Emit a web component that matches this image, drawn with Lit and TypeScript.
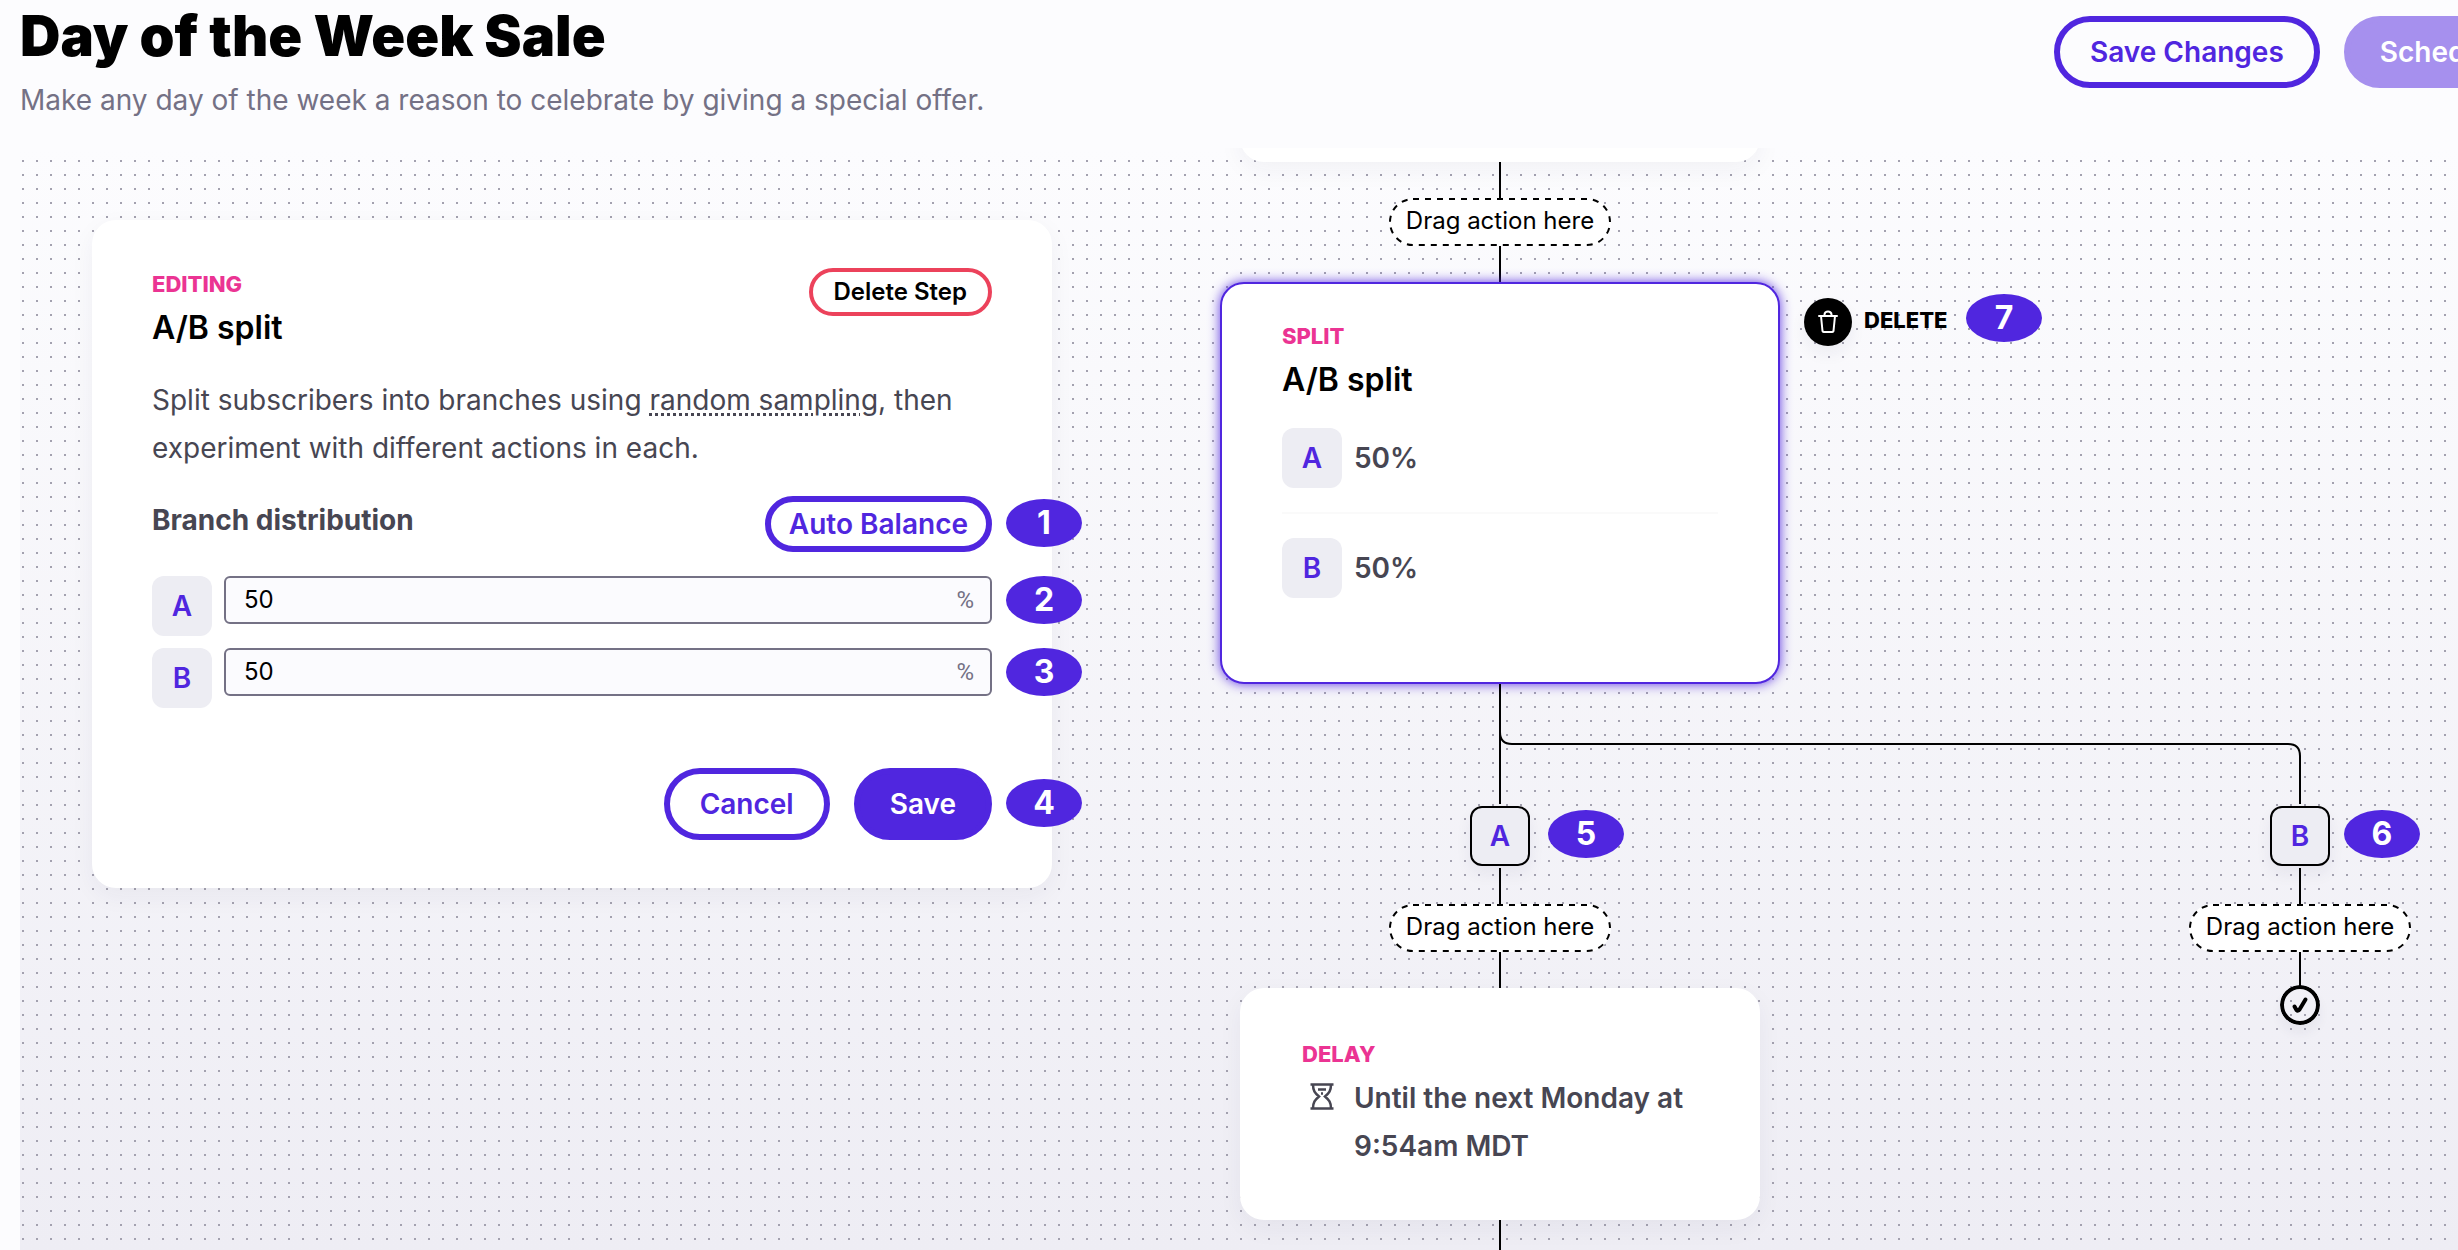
import { LitElement, html, css, svg } from "lit";
import { customElement, state } from "lit/decorators.js";

interface Branch {
  name: string;
  share: number;
}

@customElement("app-root")
export class AppRoot extends LitElement {
  @state() private branches: Branch[] = [
    { name: "A", share: 50 },
    { name: "B", share: 50 },
  ];

  static styles = css`
    :host {
      --violet: #5026df;
      --pink: #eb3493;
      --ink: #474652;
      --muted: #747185;
      display: flex;
      flex-direction: column;
      min-height: 100vh;
      overflow: hidden;
      background: #fcfcfe;
      color: #000;
      font-family: Inter, "Liberation Sans", sans-serif;
      font-size: 28px;
      line-height: 48px;
    }
    *,
    *::before {
      box-sizing: border-box;
    }
    h1,
    h2,
    p {
      margin: 0;
    }
    button,
    input {
      font: inherit;
    }
    button {
      cursor: pointer;
      white-space: nowrap;
    }

    .header {
      display: flex;
      align-items: flex-start;
      gap: 24px;
      height: 148px;
      padding: 0 0 0 20px;
    }
    .heading {
      flex: 1;
    }
    .heading h1 {
      font-size: 56px;
      line-height: 72px;
      font-weight: 900;
    }
    .heading p {
      margin-top: 4px;
      color: var(--muted);
    }
    .header-actions {
      display: flex;
      gap: 24px;
      padding-top: 16px;
      width: 404px;
    }

    .button {
      flex: none;
      height: 72px;
      padding: 0 30px;
      border: 6px solid var(--violet);
      border-radius: 36px;
      background: transparent;
      color: var(--violet);
      font-weight: 600;
      line-height: 48px;
    }
    .button.primary {
      background: var(--violet);
      color: #fff;
    }
    .button.disabled {
      background: #a690ee;
      border-color: #a690ee;
      color: #fff;
    }
    .button.compact {
      height: 56px;
      padding: 0 18px;
      line-height: 40px;
    }
    .button.danger {
      height: 48px;
      padding: 0 21px;
      border: 4px solid #ec425b;
      color: #000;
      font-size: 24px;
      line-height: 40px;
    }

    .canvas {
      flex: 1;
      display: grid;
      grid-template-columns: 960px 560px 222px;
      align-items: start;
      margin-left: 20px;
      padding-left: 72px;
      overflow: hidden;
      background-image: radial-gradient(circle, #a3a1af 1px, transparent 1px),
        linear-gradient(#fcfcfe, #eeedf4);
      background-size: 14px 14px, 100% 100%;
      background-position: 10px 6px, 0 0;
    }

    .card {
      border-radius: 24px;
      background: #fff;
      box-shadow: 0 8px 24px rgba(40, 30, 80, 0.05);
    }
    .eyebrow {
      color: var(--pink);
      font-size: 22px;
      line-height: 32px;
      font-weight: 800;
    }
    .card h2 {
      margin-top: 4px;
      font-size: 32px;
      line-height: 48px;
      font-weight: 600;
    }

    .editor {
      margin-top: 72px;
      padding: 48px 60px;
    }
    .row {
      position: relative;
      display: flex;
      justify-content: space-between;
      align-items: flex-start;
    }
    .editor .copy {
      margin-top: 24px;
      color: var(--ink);
    }
    .term {
      text-decoration: underline dotted 3px;
      text-underline-offset: 3px;
    }
    .distribution {
      margin-top: 24px;
      margin-bottom: 24px;
      color: var(--ink);
      font-weight: 700;
    }
    .field {
      gap: 12px;
      margin-bottom: 12px;
    }
    .tile {
      flex: none;
      display: block;
      width: 60px;
      height: 60px;
      border-radius: 12px;
      background: #ededf3;
      color: var(--violet);
      font-weight: 600;
      line-height: 60px;
      text-align: center;
    }
    .entry {
      flex: 1;
      display: flex;
      height: 48px;
      padding: 0 16px 0 18px;
      border: 2px solid var(--muted);
      border-radius: 6px;
      background: #fbfbfe;
      font-size: 24px;
      line-height: 44px;
    }
    .entry input {
      flex: 1;
      min-width: 0;
      padding: 0;
      border: 0;
      outline: 0;
      background: none;
      color: #000;
    }
    .unit {
      color: var(--muted);
      font-family: Roboto, Inter, sans-serif;
    }
    .footer {
      justify-content: flex-end;
      gap: 24px;
      margin-top: 60px;
    }

    .badge {
      position: absolute;
      z-index: 2;
      width: 76px;
      height: 48px;
      border-radius: 50%;
      background: var(--violet);
      color: #fff;
      font-size: 32px;
      line-height: 48px;
      font-weight: 700;
      text-align: center;
    }
    .row > .badge {
      left: calc(100% + 14px);
      top: 0;
    }
    .row.distribution > .badge {
      top: 3px;
    }
    .row.footer > .badge {
      top: 11px;
    }

    .flow {
      display: flex;
      flex-direction: column;
      align-items: center;
      margin-left: 168px;
      width: 560px;
    }
    .flow.side {
      width: 222px;
      margin-left: 577px;
      padding-top: 656px;
    }
    .link {
      position: relative;
      width: 2px;
      height: 36px;
      background: #000;
    }
    .link.long {
      height: 120px;
    }
    .link.last {
      height: 30px;
    }
    .elbow {
      position: absolute;
      left: 0;
      top: 0;
      fill: none;
      stroke: #000;
      stroke-width: 2;
    }
    .drop {
      height: 48px;
      width: 222px;
      border-radius: 24px;
      background: #fff;
      font-size: 24px;
      line-height: 46px;
      text-align: center;
      position: relative;
      white-space: nowrap;
    }
    .drop svg {
      position: absolute;
      inset: 0;
      fill: none;
      stroke: #000;
      stroke-width: 2;
      stroke-dasharray: 6 6;
    }
    .previous {
      width: 520px;
      height: 60px;
      margin-top: -46px;
    }
    .step {
      position: relative;
      width: 560px;
      height: 402px;
      padding: 36px 60px;
      border: 2px solid var(--violet);
      box-shadow: 0 0 12px rgba(80, 38, 223, 0.9);
    }
    .share {
      display: flex;
      align-items: center;
      gap: 12px;
      color: var(--ink);
      font-weight: 600;
    }
    .step .share:first-of-type {
      margin-top: 24px;
    }
    .share + .share {
      margin-top: 24px;
      padding-top: 24px;
      border-top: 2px solid #fafafa;
    }
    .step-tools {
      position: absolute;
      left: calc(100% + 26px);
      top: 14px;
    }
    .delete {
      display: flex;
      align-items: flex-start;
      gap: 12px;
      padding: 0;
      border: 0;
      background: none;
      color: #000;
      font-size: 22px;
      line-height: 44px;
      font-weight: 800;
    }
    .delete svg {
      border-radius: 50%;
      background: #000;
      box-shadow: 0 8px 16px rgba(40, 30, 80, 0.06);
    }
    .step-tools .badge {
      left: 162px;
      top: -4px;
    }
    .branch {
      position: relative;
      margin: 2px 0;
    }
    .branch .tile {
      border: 2px solid #000;
      line-height: 56px;
      box-shadow: 0 8px 16px rgba(40, 30, 80, 0.06);
    }
    .branch .badge {
      top: 4px;
      left: 78px;
    }
    .side .branch .badge {
      left: 74px;
    }
    .delay {
      width: 520px;
      padding: 50px 62px;
    }
    .wait {
      display: flex;
      gap: 16px;
      margin-top: 4px;
      color: var(--ink);
      font-weight: 600;
    }
    .wait svg {
      flex: none;
      margin: 8px 0 0 4px;
    }
    .done {
      display: block;
      margin-top: -3px;
      border-radius: 50%;
      box-shadow: 0 8px 12px rgba(40, 30, 80, 0.05);
    }
  `;

  private setShare(index: number, event: Event) {
    const share = Number((event.target as HTMLInputElement).value) || 0;
    this.branches = this.branches.map((b, i) => (i === index ? { ...b, share } : b));
  }

  private balance() {
    const share = Math.floor(100 / this.branches.length);
    this.branches = this.branches.map((b) => ({ ...b, share }));
  }

  private drop() {
    return html`<div class="drop">
      <svg width="222" height="48" aria-hidden="true">
        ${svg`<rect x="1" y="1" width="220" height="46" rx="23" />`}
      </svg>
      Drag action here
    </div>`;
  }

  private branchNode(name: string, badge: number) {
    return html`<div class="branch">
      <span class="tile">${name}</span><span class="badge">${badge}</span>
    </div>`;
  }

  private editor() {
    return html`<section class="card editor">
      <div class="row">
        <div>
          <p class="eyebrow">EDITING</p>
          <h2>A/B split</h2>
        </div>
        <button class="button danger" type="button">Delete Step</button>
      </div>
      <p class="copy">
        Split subscribers into branches using <span class="term">random sampling</span>, then
        experiment with different actions in each.
      </p>
      <div class="row distribution">
        <span>Branch distribution</span>
        <button class="button compact" type="button" @click=${this.balance}>Auto Balance</button>
        <span class="badge">1</span>
      </div>
      ${this.branches.map(
        (b, i) => html`<div class="row field">
          <label class="tile" for="share-${b.name}">${b.name}</label>
          <div class="entry">
            <input
              id="share-${b.name}"
              inputmode="numeric"
              .value=${String(b.share)}
              @change=${(e: Event) => this.setShare(i, e)}
            />
            <span class="unit">%</span>
          </div>
          <span class="badge">${i + 2}</span>
        </div>`
      )}
      <div class="row footer">
        <button class="button" type="button">Cancel</button>
        <button class="button primary" type="button">Save</button>
        <span class="badge">4</span>
      </div>
    </section>`;
  }

  render() {
    return html`
      <header class="header">
        <div class="heading">
          <h1>Day of the Week Sale</h1>
          <p>Make any day of the week a reason to celebrate by giving a special offer.</p>
        </div>
        <div class="header-actions">
          <button class="button" type="button">Save Changes</button>
          <button class="button disabled" type="button" disabled>Schedule</button>
        </div>
      </header>
      <main class="canvas">
        ${this.editor()}
        <div class="flow">
          <div class="card previous"></div>
          <div class="link"></div>
          ${this.drop()}
          <div class="link"></div>
          <section class="card step">
            <p class="eyebrow">SPLIT</p>
            <h2>A/B split</h2>
            ${this.branches.map(
              (b) => html`<div class="share"><span class="tile">${b.name}</span>${b.share}%</div>`
            )}
            <div class="step-tools">
              <button class="delete" type="button">
                <svg width="48" height="48" viewBox="0 0 48 48" fill="none" stroke="#fff" stroke-width="2" stroke-linecap="round" stroke-linejoin="round" aria-hidden="true">
                  <path d="M15 18H33M17 18L18.5 33Q18.7 34 19.7 34H28.3Q29.3 34 29.5 33L31 18M20.5 18V16.5A3.5 3 0 0 1 27.5 16.5V18" />
                </svg>
                DELETE
              </button>
              <span class="badge">7</span>
            </div>
          </section>
          <div class="link long">
            <svg class="elbow" width="802" height="120" aria-hidden="true">
              <path d="M1 0V48Q1 60 13 60H789Q801 60 801 72V120" />
            </svg>
          </div>
          ${this.branchNode("A", 5)}
          <div class="link"></div>
          ${this.drop()}
          <div class="link"></div>
          <section class="card delay">
            <p class="eyebrow">DELAY</p>
            <div class="wait">
              <svg width="32" height="32" viewBox="0 0 32 32" fill="none" stroke="#474652" stroke-width="2.5" aria-hidden="true">
                <path d="M4.500 2.500H27.500M4.500 26.500H27.500M7 2.500C7 9 9 11 13 14.500C9 18 7 20 7 26.500M25 2.500C25 9 23 11 19 14.500C23 18 25 20 25 26.500M12 7.500H20M15 11.500H17" />
              </svg>
              <span>Until the next Monday at 9:54am MDT</span>
            </div>
          </section>
          <div class="link last"></div>
        </div>
        <div class="flow side">
          ${this.branchNode("B", 6)}
          <div class="link"></div>
          ${this.drop()}
          <div class="link"></div>
          <svg class="done" width="40" height="40" viewBox="0 0 40 40" fill="none" stroke="#000" stroke-linecap="round" stroke-linejoin="round" aria-hidden="true">
            <circle cx="20" cy="20" r="18" stroke-width="4" />
            <path d="M14.500 21.500L16.500 25Q18 26.500 19.500 24.500L25.500 14.500" stroke-width="4" />
          </svg>
        </div>
      </main>
    `;
  }
}
